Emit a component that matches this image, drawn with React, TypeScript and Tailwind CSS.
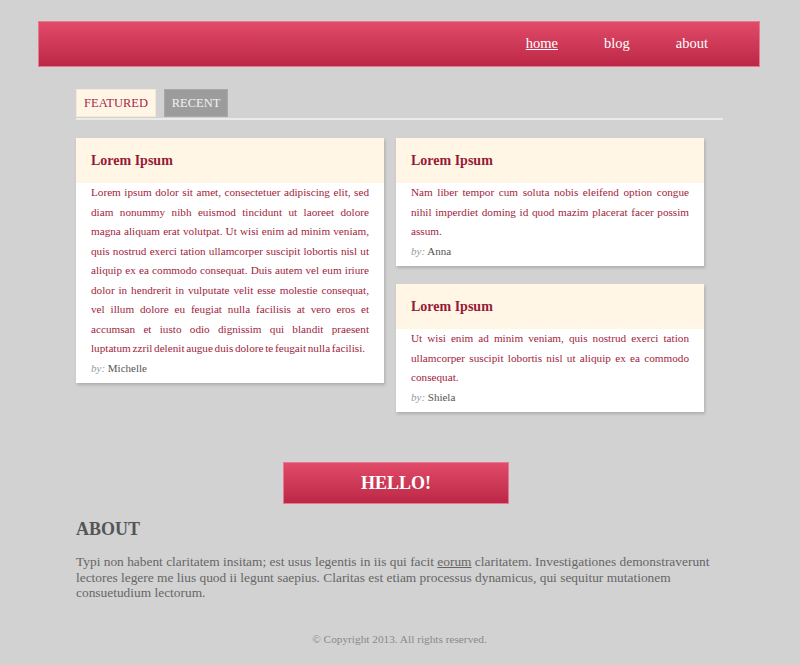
import React from "react";

const serif = { fontFamily: '"Liberation Serif", "Times New Roman", serif' };

function Card({ body, author }: { body: React.ReactNode; author: string }) {
  return (
    <div className="bg-white shadow-[1px_2px_3px_rgba(0,0,0,0.18)]">
      <div className="h-[45px] bg-[#fff6e6] flex items-center px-[15px]">
        <h3 className="text-[14px] font-bold text-[#961a37]">Lorem Ipsum</h3>
      </div>
      <div className="px-[15px] pb-[5px]">
        <p className="text-[11.2px] leading-[19.5px] text-[#a11d3d] text-justify">{body}</p>
        <p className="text-[11px] leading-[19.5px]">
          <span className="italic text-[#9a9a9a]">by:</span> <span className="text-[#555]">{author}</span>
        </p>
      </div>
    </div>
  );
}

export default function App() {
  return (
    <div className="min-h-[665px] bg-[#d2d2d2] pt-[21px]" style={serif}>
      <header className="mx-[38px] w-[722px] h-[46px] bg-gradient-to-b from-[#e14a69] to-[#bd2747] border border-[#e6798f] flex items-center justify-end pr-[51px] gap-[46px]">
        <a className="text-[14.5px] text-white underline">home</a>
        <a className="text-[14.5px] text-white">blog</a>
        <a className="text-[14.5px] text-white">about</a>
      </header>

      <main className="ml-[76px] w-[647px]">
        <div className="mt-[22px] flex gap-[8px]">
          <div className="h-[28px] w-[80px] flex items-center justify-center bg-[#fff6e6] border border-[#f2ead8] text-[12.5px] text-[#a8284a]">FEATURED</div>
          <div className="h-[28px] w-[64px] flex items-center justify-center bg-[#9c9c9c] border border-[#a8a8a8] text-[12.5px] text-[#f2f2f2]">RECENT</div>
        </div>
        <div className="mt-[1px] h-[2px] bg-[#ebebeb]" />

        <div className="mt-[18px] grid grid-cols-[308px_308px] gap-x-[12px] items-start">
          <Card
            author="Michelle"
            body={
              <>
                Lorem ipsum dolor sit amet, consectetuer adipiscing elit, sed diam nonummy nibh euismod tincidunt ut laoreet dolore magna aliquam erat volutpat. Ut wisi enim ad minim veniam, quis nostrud exerci tation ullamcorper suscipit lobortis nisl ut aliquip ex ea commodo consequat. Duis autem vel eum iriure dolor in hendrerit in vulputate velit esse molestie consequat, vel illum dolore eu feugiat nulla facilisis at vero eros et accumsan et iusto odio dignissim qui blandit praesent{" "}
                <span className="[word-spacing:-1.1px]">luptatum zzril delenit augue duis dolore te feugait nulla facilisi.</span>
              </>
            }
          />
          <div className="flex flex-col gap-[18px]">
            <Card
              author="Anna"
              body="Nam liber tempor cum soluta nobis eleifend option congue nihil imperdiet doming id quod mazim placerat facer possim assum."
            />
            <Card
              author="Shiela"
              body="Ut wisi enim ad minim veniam, quis nostrud exerci tation ullamcorper suscipit lobortis nisl ut aliquip ex ea commodo consequat."
            />
          </div>
        </div>

        <div className="mt-[50px] ml-[207px] w-[226px] h-[42px] bg-gradient-to-b from-[#e14a69] to-[#bd2747] border border-[#e6798f] flex items-center justify-center">
          <span className="text-[18px] font-bold text-white">HELLO!</span>
        </div>

        <h2 className="mt-[14px] text-[18px] font-bold text-[#555] leading-[22px]">ABOUT</h2>
        <p className="mt-[14px] text-[13.4px] leading-[15.6px] text-[#666]">
          Typi non habent claritatem insitam; est usus legentis in iis qui facit <span className="underline">eorum</span> claritatem. Investigationes demonstraverunt lectores legere me lius quod ii legunt saepius. Claritas est etiam processus dynamicus, qui sequitur mutationem consuetudium lectorum.
        </p>

        <p className="mt-[30px] text-center text-[11.3px] text-[#8a8a8a]">© Copyright 2013. All rights reserved.</p>
      </main>
    </div>
  );
}
